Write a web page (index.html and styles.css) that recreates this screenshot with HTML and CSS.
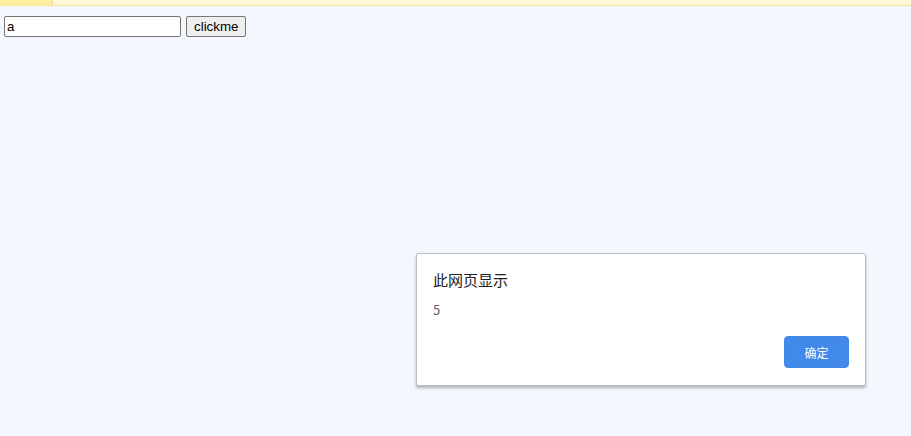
FILE: index.html
```html
<!DOCTYPE html>
<html lang="zh-CN">
<head>
  <meta charset="UTF-8" />
  <title>clickme</title>
  <link rel="stylesheet" href="styles.css">
</head>
<body>

  <div class="topbar">
    <span class="topbar-tab"></span>
  </div>

  <div class="form-row">
    <input type="text" class="text-input" value="a">
    <button class="click-btn">clickme</button>
  </div>

  <div class="alert-box">
    <div class="alert-title">此网页显示</div>
    <div class="alert-msg">5</div>
    <div class="alert-actions">
      <button class="alert-ok">确定</button>
    </div>
  </div>

</body>
</html>
```
FILE: styles.css
```css
body {
  margin: 0;
  background-color: #F3F7FE;
  font-family: "Liberation Sans", Arial, sans-serif;
  height: 436px;
  overflow: hidden;
}

.topbar {
  height: 5px;
  background-color: #FFF7D6;
  border-bottom: 1px solid #F5E3A0;
  display: flex;
}

.topbar-tab {
  width: 52px;
  background-color: #FFEDA0;
  border-right: 1px solid #F2DC8A;
}

.form-row {
  display: flex;
  gap: 5px;
  padding: 10px 0 0 4px;
}

.text-input {
  width: 171px;
  height: 17px;
  margin: 0;
  padding: 1px 2px;
  border: 1px solid #767676;
  border-radius: 2px;
  font-family: "Liberation Sans", Arial, sans-serif;
  font-size: 13.33px;
  background: #fff;
}

.click-btn {
  height: 21px;
  margin: 0;
  padding: 1px 7px;
  border: 1px solid #767676;
  border-radius: 2px;
  background-color: #EFEFEF;
  font-family: "Liberation Sans", Arial, sans-serif;
  font-size: 13.33px;
  color: #000;
}

.alert-box {
  position: absolute;
  left: 416px;
  top: 253px;
  width: 448px;
  height: 131px;
  background: #fff;
  border: 1px solid #B9BDC3;
  border-radius: 2px;
  box-shadow: 0 2px 3px rgba(0, 0, 0, 0.28);
  font-family: "Noto Sans CJK SC", "Liberation Sans", sans-serif;
  display: flex;
  flex-direction: column;
}

.alert-title {
  padding: 15px 0 0 16px;
  font-size: 15px;
  line-height: 22px;
  color: #202124;
}

.alert-msg {
  padding: 10px 0 0 16px;
  font-size: 13px;
  line-height: 18px;
  color: #5F6368;
}

.alert-actions {
  display: flex;
  justify-content: flex-end;
  padding: 17px 16px 0 0;
}

.alert-ok {
  width: 65px;
  height: 32px;
  border: 1px solid #3F86E8;
  border-radius: 4px;
  background-color: #4289EC;
  color: #fff;
  font-family: "Noto Sans CJK SC", "Liberation Sans", sans-serif;
  font-size: 12px;
}
```
